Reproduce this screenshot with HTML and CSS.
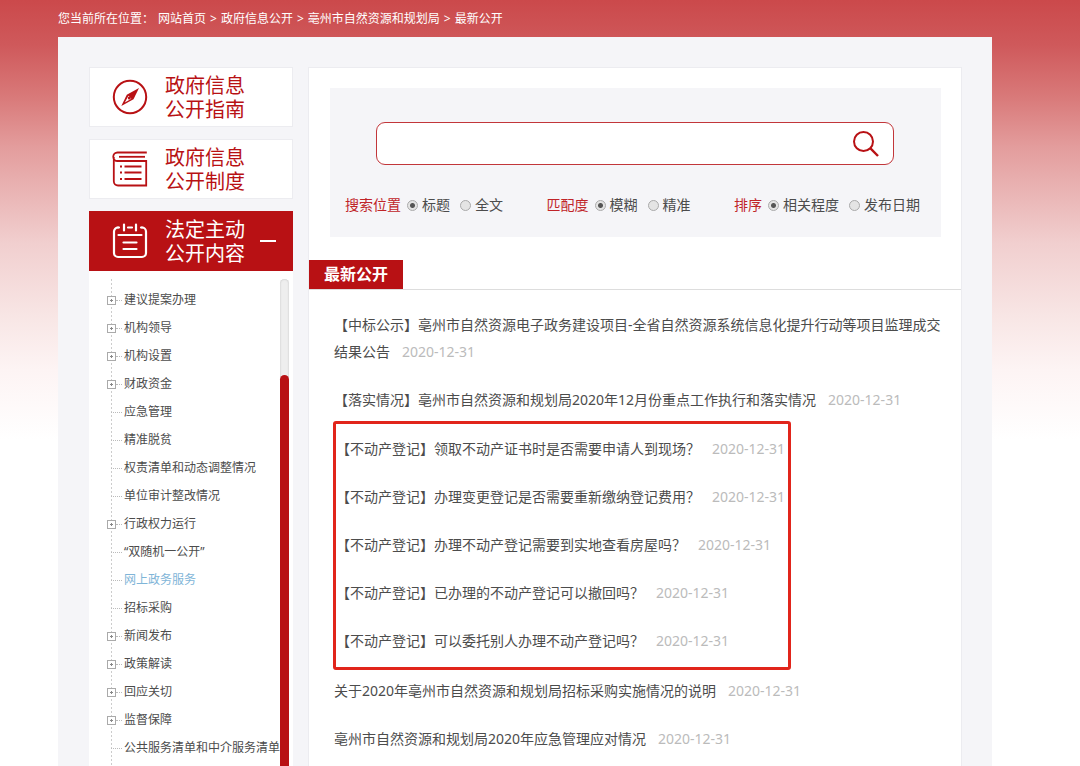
FILE: index.html
```html
<!DOCTYPE html>
<html lang="zh-CN">
<head>
<meta charset="utf-8">
<title>最新公开</title>
<link rel="stylesheet" href="styles.css">
</head>
<body>
<nav class="crumbs" aria-label="当前位置">
  <span>您当前所在位置：</span>
  <a href="#">网站首页</a><span>&gt;</span>
  <a href="#">政府信息公开</a><span>&gt;</span>
  <a href="#">亳州市自然资源和规划局</a><span>&gt;</span>
  <a href="#">最新公开</a>
</nav>
<div class="shell">
  <aside class="side">
    <a class="card" href="#">
      <svg class="card-icon" viewBox="0 0 36 36" fill="none" stroke="currentColor" stroke-width="2" aria-hidden="true">
        <circle cx="18" cy="18" r="16.2"/>
        <path d="M27 9 21.500 20.300 9.300 27 14.800 15.700Z" fill="currentColor" stroke="none"/>
        <path d="M16.500 16.800 12.800 23.600 19.400 19.800Z" fill="#fff" stroke="none"/>
        <circle cx="17.300" cy="19" r="1.500" fill="currentColor" stroke="none"/>
      </svg>
      <span class="card-text">政府信息<br>公开指南</span>
    </a>
    <a class="card" href="#">
      <svg class="card-icon" viewBox="0 0 36 36" fill="none" stroke="currentColor" stroke-width="1.800" aria-hidden="true">
        <path d="M34.800 1.500H5.500a4 4 0 0 0 0 8.500H34.200v24.500H6a4.200 4.200 0 0 1-4.200-4.200V6"/>
        <path d="M7 5.800h26"/>
        <path d="M12.500 15.500h17M12.500 21.500h17M12.500 28h17M8 15.500h2M8 21.500h2M8 28h2"/>
      </svg>
      <span class="card-text">政府信息<br>公开制度</span>
    </a>
    <a class="card card-active" href="#">
      <svg class="card-icon" viewBox="0 0 36 36" fill="none" stroke="currentColor" stroke-width="2.200" stroke-linecap="round" aria-hidden="true">
        <path d="M6 4.500a4 4 0 0 0-4 4V30a4 4 0 0 0 4 4h24a4 4 0 0 0 4-4V8.500a4 4 0 0 0-4-4M16 4.500h4"/>
        <path d="M6 4.500h1M29 4.500h1M12 1.500v6M24 1.500v6"/>
        <path d="M6.500 12h23M11.500 19.500h13M11.500 26h13"/>
      </svg>
      <span class="card-text">法定主动<br>公开内容</span>
      <span class="minus"></span>
    </a>
    <div class="tree-box">
      <ul class="tree">
        <li class="node"><button class="toggle" type="button" aria-label="展开"></button><a href="#">建议提案办理</a></li>
        <li class="node"><button class="toggle" type="button" aria-label="展开"></button><a href="#">机构领导</a></li>
        <li class="node"><button class="toggle" type="button" aria-label="展开"></button><a href="#">机构设置</a></li>
        <li class="node"><button class="toggle" type="button" aria-label="展开"></button><a href="#">财政资金</a></li>
        <li class="node"><a href="#">应急管理</a></li>
        <li class="node"><a href="#">精准脱贫</a></li>
        <li class="node"><a href="#">权责清单和动态调整情况</a></li>
        <li class="node"><a href="#">单位审计整改情况</a></li>
        <li class="node"><button class="toggle" type="button" aria-label="展开"></button><a href="#">行政权力运行</a></li>
        <li class="node"><a href="#">“双随机一公开”</a></li>
        <li class="node node-current"><a href="#">网上政务服务</a></li>
        <li class="node"><a href="#">招标采购</a></li>
        <li class="node"><button class="toggle" type="button" aria-label="展开"></button><a href="#">新闻发布</a></li>
        <li class="node"><button class="toggle" type="button" aria-label="展开"></button><a href="#">政策解读</a></li>
        <li class="node"><button class="toggle" type="button" aria-label="展开"></button><a href="#">回应关切</a></li>
        <li class="node"><button class="toggle" type="button" aria-label="展开"></button><a href="#">监督保障</a></li>
        <li class="node"><a href="#">公共服务清单和中介服务清单</a></li>
      </ul>
      <div class="track"><div class="thumb"></div></div>
    </div>
  </aside>
  <main class="main">
    <form class="search">
      <div class="search-box">
        <input class="search-input" type="text" aria-label="搜索">
        <button class="search-button" type="button" aria-label="搜索">
          <svg viewBox="0 0 28 28" width="28" height="28" fill="none" stroke="currentColor" stroke-width="2" aria-hidden="true">
            <circle cx="11.500" cy="11.500" r="9.500"/><path d="M18.200 18.200 26 26" stroke-width="2.400"/>
          </svg>
        </button>
      </div>
      <div class="options">
        <div class="group" role="radiogroup" aria-labelledby="g1">
          <span class="group-name" id="g1">搜索位置</span>
          <label class="option"><input type="radio" name="place" checked>标题</label>
          <label class="option"><input type="radio" name="place">全文</label>
        </div>
        <div class="group" role="radiogroup" aria-labelledby="g2">
          <span class="group-name" id="g2">匹配度</span>
          <label class="option"><input type="radio" name="match" checked>模糊</label>
          <label class="option"><input type="radio" name="match">精准</label>
        </div>
        <div class="group" role="radiogroup" aria-labelledby="g3">
          <span class="group-name" id="g3">排序</span>
          <label class="option"><input type="radio" name="sort" checked>相关程度</label>
          <label class="option"><input type="radio" name="sort">发布日期</label>
        </div>
      </div>
    </form>
    <div class="tabs"><h2 class="tab">最新公开</h2></div>
    <div class="news">
      <p class="item"><a href="#">【中标公示】亳州市自然资源电子政务建设项目-全省自然资源系统信息化提升行动等项目监理成交结果公告</a><time>2020-12-31</time></p>
      <p class="item"><a href="#">【落实情况】亳州市自然资源和规划局2020年12月份重点工作执行和落实情况</a><time>2020-12-31</time></p>
      <div class="marked">
        <p class="item"><a href="#">【不动产登记】领取不动产证书时是否需要申请人到现场？</a><time>2020-12-31</time></p>
        <p class="item"><a href="#">【不动产登记】办理变更登记是否需要重新缴纳登记费用？</a><time>2020-12-31</time></p>
        <p class="item"><a href="#">【不动产登记】办理不动产登记需要到实地查看房屋吗？</a><time>2020-12-31</time></p>
        <p class="item"><a href="#">【不动产登记】已办理的不动产登记可以撤回吗？</a><time>2020-12-31</time></p>
        <p class="item"><a href="#">【不动产登记】可以委托别人办理不动产登记吗？</a><time>2020-12-31</time></p>
      </div>
      <p class="item"><a href="#">关于2020年亳州市自然资源和规划局招标采购实施情况的说明</a><time>2020-12-31</time></p>
      <p class="item"><a href="#">亳州市自然资源和规划局2020年应急管理应对情况</a><time>2020-12-31</time></p>
    </div>
  </main>
</div>
</body>
</html>
```

FILE: styles.css
```css
* {
  box-sizing: border-box;
}

body {
  margin: 0;
  min-height: 100vh;
  display: flex;
  flex-direction: column;
  padding: 0 88px 0 58px;
  background: linear-gradient(#cb494b 0, #cf595b 45px, #d97a7a 98px, #e39c9c 146px, #eab6b6 195px, #f1cfcf 244px, #f8e6e5 317px, #fdf4f4 370px, #fff 440px) no-repeat #fff;
  color: #4c4c4c;
  font-family: "Noto Sans", "Noto Sans CJK SC", sans-serif;
  font-size: 14px;
  text-spacing-trim: space-all;
}

a {
  color: inherit;
  text-decoration: none;
}

.crumbs {
  display: flex;
  gap: 4px;
  height: 37px;
  line-height: 37px;
  font-size: 12px;
  color: #fff;
  white-space: nowrap;
}

.shell {
  flex: 1;
  display: flex;
  gap: 15px;
  padding: 30px 30px 0 31px;
  background: #f5f5f8;
}

.side {
  flex: 0 0 204px;
  display: flex;
  flex-direction: column;
}

.card {
  display: flex;
  align-items: center;
  gap: 17px;
  height: 60px;
  margin-bottom: 12px;
  padding-left: 22px;
  border: 1px solid #ececf0;
  background: #fff;
  color: #b81114;
}

.card-icon {
  width: 36px;
  height: 36px;
}

.card-text {
  padding-top: 2px;
  font-size: 20px;
  line-height: 24px;
}

.card-active {
  margin-bottom: 0;
  border-color: #b81114;
  background: #b81114;
  color: #fff;
}

.minus {
  width: 16px;
  height: 2px;
  margin-left: -2px;
  background: #fff;
}

.tree-box {
  flex: 1;
  display: flex;
  justify-content: space-between;
  padding: 8px 4px 0 22px;
  background: #fff;
}

.tree {
  margin: 0;
  padding: 7px 0 0;
  list-style: none;
  font-size: 12px;
  line-height: 28px;
  white-space: nowrap;
  background: repeating-linear-gradient(#ccc 0 2px, transparent 2px 4px) 0 0 / 1px 100% no-repeat;
}

.node {
  display: flex;
  align-items: center;
  height: 28px;
}

.node::before {
  content: "";
  width: 11px;
  margin-right: 2px;
  border-top: 1px dotted #bbb;
}

.node:has(.toggle)::before {
  order: 1;
  width: 6px;
}

.node a {
  order: 2;
}

.node-current {
  color: #7fb5d8;
}

.toggle {
  width: 9px;
  height: 9px;
  margin: 0 0 0 -4px;
  padding: 0;
  border: 1px solid #aaa;
  background:
    linear-gradient(#888, #888) center / 3px 1px no-repeat,
    linear-gradient(#888, #888) center / 1px 3px no-repeat,
    #fff;
}

.track {
  flex: 0 0 9px;
  display: flex;
  flex-direction: column;
  padding-top: 96px;
  border-radius: 5px 5px 0 0;
  background: #eee;
  box-shadow: inset 0 0 2px #bbb;
}

.thumb {
  flex: 1;
  border-radius: 5px 5px 0 0;
  background: #b81114;
}

.main {
  flex: 1;
  min-width: 0;
  border: 1px solid #ececf0;
  border-bottom: 0;
  background: #fff;
}

.search {
  margin: 20px 20px 0 21px;
  padding: 34px 21px 20px 15px;
  background: #f5f5f8;
}

.search-box {
  display: flex;
  align-items: center;
  height: 43px;
  margin: 0 26px 0 31px;
  padding-right: 13px;
  border: 1px solid #c2363a;
  border-radius: 9px;
  background: #fff;
}

.search-input {
  flex: 1;
  min-width: 0;
  height: 100%;
  padding: 0 12px;
  border: 0;
  outline: 0;
  background: none;
  font: inherit;
}

.search-button {
  display: flex;
  padding: 0;
  border: 0;
  background: none;
  color: #b81114;
}

.options {
  display: flex;
  justify-content: space-between;
  margin-top: 28px;
  line-height: 24px;
  white-space: nowrap;
}

.group {
  display: flex;
  gap: 10px;
}

.group-name {
  margin-right: -4px;
  color: #c02428;
}

.option {
  display: flex;
  align-items: center;
  gap: 4px;
}

.option input {
  appearance: none;
  width: 11px;
  height: 11px;
  margin: 0;
  border: 1px solid #aaa;
  border-radius: 50%;
  background: #e4e4e4;
}

.option input:checked {
  background: radial-gradient(#555 0 2px, #e4e4e4 3px);
}

.tabs {
  display: flex;
  margin-top: 23px;
  border-bottom: 1px solid #ddd;
}

.tab {
  margin: 0;
  padding: 0 15px;
  background: #b81114;
  color: #fff;
  font-size: 16px;
  line-height: 29px;
}

.news {
  display: flex;
  flex-direction: column;
  gap: 21px;
  padding: 21px 16px 0 25px;
}

.item {
  margin: 0;
  line-height: 27px;
}

.item time {
  margin-left: 12px;
  color: #bbb;
}

.marked {
  display: flex;
  flex-direction: column;
  gap: 21px;
  align-self: flex-start;
  margin: -13px 0 -14px -1px;
  padding: 11px 3px 13px 0;
  border: 3px solid #e1251b;
  border-radius: 3px;
}
```
